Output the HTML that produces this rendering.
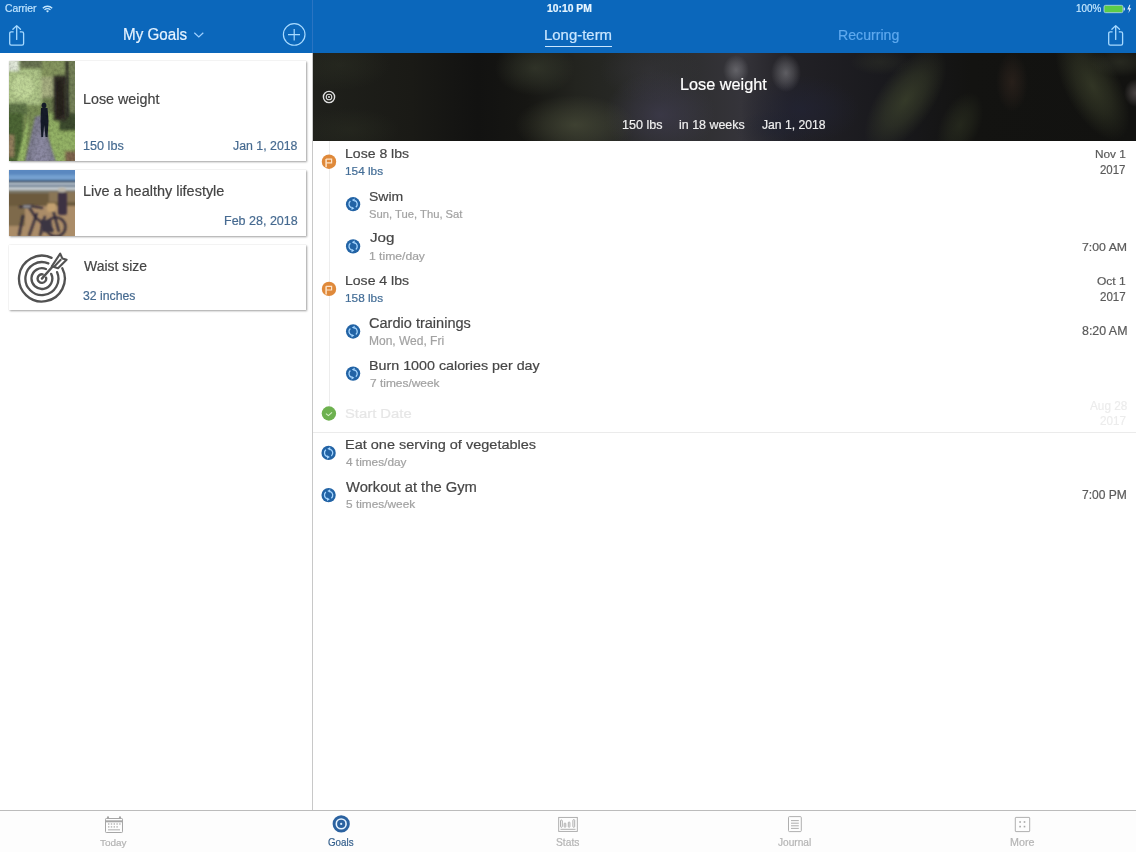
<!DOCTYPE html>
<html><head><meta charset="utf-8">
<style>
html,body{margin:0;padding:0;}
body{width:1136px;height:852px;position:relative;overflow:hidden;background:#ffffff;font-family:"Liberation Sans",sans-serif;}
.a{position:absolute;}
.t{position:absolute;white-space:nowrap;transform-origin:0 0;-webkit-text-stroke:0.2px currentColor;}
#hdr{left:0;top:0;width:1136px;height:53px;background:#0b67bb;}
#vdiv{left:312px;top:0;width:1px;height:810px;background:#c8c8c8;}
#hdiv{left:312px;top:0;width:1px;height:53px;background:#2a74c2;}
.card{position:absolute;left:8.5px;width:297.5px;background:#fff;box-shadow:0.5px 1px 2px rgba(0,0,0,0.36), 0 0 1px rgba(0,0,0,0.14);}
#banner{left:313px;top:53px;width:823px;height:88px;overflow:hidden;background:#1c1d18;}
#tline{left:328.5px;top:141px;width:1px;height:273px;background:#ededed;}
#sep{left:313px;top:432px;width:823px;height:1px;background:#ebebeb;}
#tabline{left:0;top:810px;width:1136px;height:1px;background:#bcbcbc;}
#tabbar{left:0;top:811px;width:1136px;height:41px;background:#fdfdfd;}
</style></head>
<body>
<div id="hdr" class="a"></div>
<div id="hdiv" class="a"></div>

<!-- status bar icons -->
<svg class="a" style="left:42px;top:5px" width="11" height="8" viewBox="0 0 11 8">
  <path d="M0.8 3.2 A6.6 6.6 0 0 1 10.2 3.2" fill="none" stroke="#c6e8ff" stroke-width="1.3"/>
  <path d="M2.5 4.9 A4.2 4.2 0 0 1 8.5 4.9" fill="none" stroke="#c6e8ff" stroke-width="1.3"/>
  <path d="M5.5 7.4 L4 6.1 A2.1 2.1 0 0 1 7 6.1 Z" fill="#c6e8ff"/>
</svg>
<svg class="a" style="left:1103px;top:4px" width="32" height="10" viewBox="0 0 32 10">
  <rect x="1" y="1.3" width="19" height="7.4" rx="1.6" fill="#5ccc48" stroke="#b8d8f0" stroke-width="0.8"/>
  <rect x="20.6" y="3.6" width="1.4" height="2.8" fill="#c0dcf2"/>
  <path d="M26.5 0.8 L24.3 5.4 L26.2 5.4 L25.4 9.2 L28.2 4.3 L26.3 4.3 L27.3 0.8 Z" fill="#e8f2ff"/>
</svg>

<!-- header icons -->
<svg class="a" style="left:8px;top:24px" width="18" height="23" viewBox="0 0 18 23">
  <path d="M5.6 7.9 H3.3 Q1.7 7.9 1.7 9.5 V19.5 Q1.7 21.1 3.3 21.1 H14 Q15.6 21.1 15.6 19.5 V9.5 Q15.6 7.9 14 7.9 H11.8" fill="none" stroke="#a8daff" stroke-width="1.3"/>
  <path d="M8.7 15.4 V1.6 M4.9 5.3 L8.7 1.6 L12.5 5.3" fill="none" stroke="#a8daff" stroke-width="1.3" stroke-linecap="round" stroke-linejoin="round"/>
</svg>
<svg class="a" style="left:1107px;top:24px" width="18" height="23" viewBox="0 0 18 23">
  <path d="M5.6 7.9 H3.3 Q1.7 7.9 1.7 9.5 V19.5 Q1.7 21.1 3.3 21.1 H14 Q15.6 21.1 15.6 19.5 V9.5 Q15.6 7.9 14 7.9 H11.8" fill="none" stroke="#a8daff" stroke-width="1.3"/>
  <path d="M8.7 15.4 V1.6 M4.9 5.3 L8.7 1.6 L12.5 5.3" fill="none" stroke="#a8daff" stroke-width="1.3" stroke-linecap="round" stroke-linejoin="round"/>
</svg>
<svg class="a" style="left:193px;top:31px" width="12" height="8" viewBox="0 0 12 8">
  <path d="M1.3 1.8 L5.8 6 L10.3 1.8" fill="none" stroke="#9fd0ff" stroke-width="1.2"/>
</svg>
<svg class="a" style="left:282px;top:22px" width="25" height="25" viewBox="0 0 25 25">
  <circle cx="12.2" cy="12.45" r="10.8" fill="none" stroke="#a8daff" stroke-width="1.2"/>
  <path d="M12.2 7 V18.4 M6 12.6 H18" stroke="#a8daff" stroke-width="1.2"/>
</svg>
<div class="a" style="left:545px;top:46px;width:67px;height:1.4px;background:#c9e6ff"></div>

<!-- left cards -->
<div class="card" style="top:61px;height:100px">
  <svg class="a" style="left:0;top:0" width="66" height="100" viewBox="0 0 66 100">
    <defs>
      <filter id="b15" x="-30%" y="-30%" width="160%" height="160%"><feGaussianBlur stdDeviation="1.5"/></filter>
      <filter id="b08" x="-30%" y="-30%" width="160%" height="160%"><feGaussianBlur stdDeviation="0.8"/></filter>
      <filter id="b05" x="-30%" y="-30%" width="160%" height="160%"><feGaussianBlur stdDeviation="0.45"/></filter>
      <filter id="tex1" x="0" y="0" width="100%" height="100%">
        <feTurbulence type="fractalNoise" baseFrequency="0.35" numOctaves="2" seed="3" result="n"/>
        <feColorMatrix in="n" type="matrix" values="0 0 0 0 0  0 0 0 0 0  0 0 0 0 0  0 0 0 1.6 -0.55" result="m"/>
        <feComposite in="m" in2="SourceGraphic" operator="in"/>
      </filter>
      <clipPath id="c1"><rect width="66" height="100"/></clipPath>
    </defs>
    <g clip-path="url(#c1)">
    <rect width="66" height="100" fill="#7a8e56"/>
    <g filter="url(#b15)">
      <rect x="-4" y="8" width="36" height="36" fill="#afc588"/>
      <ellipse cx="14" cy="26" rx="11" ry="11" fill="#c2d89a"/>
      <rect x="-4" y="-4" width="14" height="14" fill="#e2e9da"/>
      <rect x="12" y="-4" width="22" height="11" fill="#6a7552"/>
      <rect x="33" y="-4" width="30" height="20" fill="#86965e"/>
      <rect x="32" y="16" width="14" height="22" fill="#a8b082"/>
      <rect x="-4" y="42" width="22" height="12" fill="#5e7446"/>
      <rect x="34" y="36" width="14" height="16" fill="#6e7e50"/>
      <rect x="-4" y="52" width="18" height="52" fill="#4e6636"/>
      <rect x="40" y="52" width="30" height="52" fill="#94b266"/>
      <rect x="50" y="46" width="18" height="24" fill="#3e4c2e"/>
      <rect x="-4" y="74" width="9" height="22" fill="#94805e"/>
      <rect x="56" y="90" width="12" height="12" fill="#806650"/>
      <rect x="60" y="-4" width="8" height="56" fill="#76825a"/>
      <rect x="44" y="14" width="14" height="46" fill="#34302a"/>
    </g>
    <g filter="url(#b08)">
      <path d="M8 101 L15 72 L20 54 L16 101 Z" fill="#98b868"/>
      <path d="M47 18 L54 18 L55 54 L47.5 58 Z" fill="#26201c"/>
      <path d="M56.5 0 L59.5 0 L60 56 L57 56 Z" fill="#30302a"/>
    </g>
    <path d="M16 101 L26 56 L32 54 L47 101 Z" fill="#7f7e92" filter="url(#b08)"/>
    <path d="M23 101 L28 74 L36 74 L41 101 Z" fill="#8c8aa2" filter="url(#b15)"/>
    <g filter="url(#b05)" fill="#161b2c">
      <ellipse cx="35" cy="44.5" rx="2.4" ry="2.8"/>
      <path d="M32 47 L38.5 47 L39.5 60 L38.5 76 L36.5 76 L35.2 64 L34 76 L32.3 76 L31.5 60 Z"/>
    </g>
    <rect width="66" height="100" fill="#1a2010" filter="url(#tex1)" opacity="0.2"/>
    </g>
  </svg>
</div>
<div class="card" style="top:170px;height:66px">
  <svg class="a" style="left:0;top:0" width="66" height="66" viewBox="0 0 66 66">
    <defs><clipPath id="c2"><rect width="66" height="66"/></clipPath></defs>
    <g clip-path="url(#c2)">
    <rect width="66" height="66" fill="#9a7c5a"/>
    <g filter="url(#b08)">
      <rect x="-4" y="-4" width="74" height="10" fill="#5a88c0"/>
      <rect x="-4" y="5" width="74" height="6" fill="#74a0d0"/>
      <rect x="-4" y="10" width="74" height="3" fill="#2d4a68"/>
      <rect x="-4" y="12.5" width="74" height="3" fill="#b8c2cc"/>
      <rect x="-4" y="15" width="74" height="2.5" fill="#5a7088"/>
      <rect x="-4" y="17" width="74" height="3" fill="#c4ccd2"/>
      <rect x="-4" y="20" width="74" height="3" fill="#7e7a6c"/>
      <rect x="-4" y="23" width="74" height="13" fill="#6c5a3e"/>
      <rect x="40" y="22" width="30" height="10" fill="#8a7656"/>
      <rect x="-4" y="36" width="74" height="34" fill="#aa8c68"/>
      <rect x="-4" y="36" width="20" height="20" fill="#7e6a4c"/>
    </g>
    <g filter="url(#b08)" fill="none" stroke="#282236" stroke-width="2.2">
      <circle cx="47" cy="57" r="9.5"/>
      <path d="M10 37 L22 36 L34 38 M20 37 L27 48 L44 61 M28 43 L20 66 M36 46 L31 66 M44 40 L50 62 M14 45 L10 66"/>
    </g>
    <g filter="url(#b08)">
      <path d="M32 50 L42 50 L44 62 L33 62 Z" fill="#3a3442"/>
      <rect x="49" y="22" width="9" height="23" rx="2" fill="#3c3242"/>
      <ellipse cx="53" cy="20" rx="4" ry="2.5" fill="#bcb6a8"/>
      <rect x="38" y="33" width="9" height="9" rx="2" fill="#c2a070"/>
      <rect x="14" y="35" width="8" height="3" fill="#8c8c90"/>
    </g>
    </g>
  </svg>
</div>
<div class="card" style="top:245px;height:65px">
  <svg class="a" style="left:0;top:0" width="66" height="65" viewBox="0 0 66 65">
    <path d="M53.30 23.20 A22.9 22.9 0 1 1 42.58 12.85 M48.09 27.15 A16.5 16.5 0 1 1 39.35 18.41 M42.17 28.88 A10.4 10.4 0 1 1 36.96 24.03 M37.11 32.71 A4.3 4.3 0 1 1 33.65 29.37" fill="none" stroke="#525252" stroke-width="2.35" stroke-linecap="round"/>
    <path d="M32.90 33.60 L48.50 16.00" stroke="#525252" stroke-width="2.35" stroke-linecap="round"/>
    <path d="M42.80 21.30 L51.20 8.60 L53.40 13.60 L57.60 14.80 L49.00 23.30 Z" fill="#ffffff" stroke="#525252" stroke-width="2.1" stroke-linejoin="round"/>
    <path d="M44.60 22.20 L52.20 14.30" stroke="#525252" stroke-width="2"/>
  </svg>
</div>

<!-- banner -->
<div id="banner" class="a" style="background:
    radial-gradient(13px 15px at 423px 17px, rgba(170,170,175,0.4) 0%, rgba(170,170,175,0.22) 50%, rgba(170,170,175,0) 100%),
    radial-gradient(15px 19px at 473px 20px, rgba(175,175,180,0.42) 0%, rgba(175,175,180,0.23) 50%, rgba(175,175,180,0) 100%),
    radial-gradient(60px 30px at 262px 72px, rgba(80,84,62,0.6) 0%, rgba(80,84,62,0.33) 50%, rgba(80,84,62,0) 100%),
    radial-gradient(40px 28px at 222px 15px, rgba(70,76,58,0.5) 0%, rgba(70,76,58,0.28) 50%, rgba(70,76,58,0) 100%),
    radial-gradient(55px 45px at 347px 62px, rgba(68,64,88,0.6) 0%, rgba(68,64,88,0.33) 50%, rgba(68,64,88,0) 100%),
    radial-gradient(50px 30px at 337px 17px, rgba(58,56,64,0.45) 0%, rgba(58,56,64,0.25) 50%, rgba(58,56,64,0) 100%),
    radial-gradient(60px 35px at 487px 57px, rgba(34,36,56,0.6) 0%, rgba(34,36,56,0.33) 50%, rgba(34,36,56,0) 100%),
    radial-gradient(50px 25px at 27px 12px, rgba(50,54,40,0.35) 0%, rgba(50,54,40,0.19) 50%, rgba(50,54,40,0) 100%),
    radial-gradient(50px 22px at 37px 77px, rgba(48,52,38,0.35) 0%, rgba(48,52,38,0.19) 50%, rgba(48,52,38,0) 100%),
    radial-gradient(16px 30px at 699px 29px, rgba(70,50,40,0.4) 0%, rgba(70,50,40,0.22) 50%, rgba(70,50,40,0) 100%),
    radial-gradient(12px 14px at 823px 40px, rgba(140,130,130,0.45) 0%, rgba(140,130,130,0.25) 50%, rgba(140,130,130,0) 100%),
    linear-gradient(90deg, #1f201b 0%, #1a1a16 12%, #121211 20%, #161613 26%, #23241f 32%, #2a2b2a 42%, #35343a 52%, #222126 58%, #19191d 70%, #131311 80%, #121210 100%);"></div>
<div class="a" style="left:313px;top:53px;width:823px;height:88px;overflow:hidden"><div class="a" style="left:-313px;top:-53px;width:1136px;height:200px"><div class="a" style="left:877.5px;top:40.0px;width:55px;height:120px;transform:rotate(35deg);background:radial-gradient(closest-side, rgba(72,80,50,0.6) 0%, rgba(72,80,50,0.36) 50%, rgba(72,80,50,0) 100%);"></div><div class="a" style="left:1064.5px;top:26.0px;width:55px;height:120px;transform:rotate(-28deg);background:radial-gradient(closest-side, rgba(70,76,50,0.6) 0%, rgba(70,76,50,0.36) 50%, rgba(70,76,50,0) 100%);"></div><div class="a" style="left:940.0px;top:90.0px;width:40px;height:70px;transform:rotate(25deg);background:radial-gradient(closest-side, rgba(56,62,40,0.45) 0%, rgba(56,62,40,0.27) 50%, rgba(56,62,40,0) 100%);"></div><div class="a" style="left:1090.0px;top:47.0px;width:60px;height:30px;transform:rotate(0deg);background:radial-gradient(closest-side, rgba(70,74,56,0.4) 0%, rgba(70,74,56,0.24) 50%, rgba(70,74,56,0) 100%);"></div><div class="a" style="left:850.0px;top:49.0px;width:60px;height:26px;transform:rotate(0deg);background:radial-gradient(closest-side, rgba(56,60,44,0.35) 0%, rgba(56,60,44,0.21) 50%, rgba(56,60,44,0) 100%);"></div><div class="a" style="left:735.0px;top:110.0px;width:80px;height:40px;transform:rotate(0deg);background:radial-gradient(closest-side, rgba(30,34,50,0.4) 0%, rgba(30,34,50,0.24) 50%, rgba(30,34,50,0) 100%);"></div></div></div>
<svg class="a" style="left:320px;top:88px" width="18" height="18" viewBox="0 0 18 18">
  <circle cx="9" cy="9" r="5.6" fill="none" stroke="#e0e0e0" stroke-width="1.4"/>
  <circle cx="9" cy="9" r="2.8" fill="none" stroke="#e0e0e0" stroke-width="1.1"/>
  <circle cx="9" cy="9" r="0.9" fill="#f0f0f0"/>
</svg>

<div id="vdiv" class="a" style="top:53px;height:757px"></div>
<div id="tline" class="a"></div>
<div id="sep" class="a"></div>

<!-- timeline icons -->
<svg class="a" style="left:0;top:0;overflow:visible" width="1" height="1">
  <defs>
    <g id="flag">
      <circle r="7.2" fill="#df893a"/>
      <path d="M-2.9 5.6 V-2.6" stroke="#fde3c8" stroke-width="1.5"/>
      <path d="M-2.9 -2.6 H2.6 V1.1 H-2.9" fill="none" stroke="#fde3c8" stroke-width="1.2"/>
    </g>
    <g id="rec">
      <circle r="7.15" fill="#2263a5"/>
      <path d="M-2.75 -3.1 A4.1 4.1 0 0 0 -1.5 3.8" fill="none" stroke="#a6d6ff" stroke-width="1.3"/>
      <path d="M2.75 3.1 A4.1 4.1 0 0 0 1.5 -3.8" fill="none" stroke="#a6d6ff" stroke-width="1.3"/>
      <path d="M-1.6 2.4 L1.3 4.1 L-1.6 5.8 Z" fill="#a6d6ff"/>
      <path d="M1.6 -2.4 L-1.3 -4.1 L1.6 -5.8 Z" fill="#a6d6ff"/>
    </g>
  </defs>
  <use href="#flag" x="329" y="161.7"/>
  <use href="#rec" x="353.1" y="204.2"/>
  <use href="#rec" x="353.1" y="246.4"/>
  <use href="#flag" x="329" y="288.9"/>
  <use href="#rec" x="353.1" y="331.5"/>
  <use href="#rec" x="353.1" y="373.6"/>
  <g transform="translate(328.9 413.5)">
    <circle r="7.2" fill="#6db14f"/>
    <path d="M-3 0.1 L-0.5 2.1 L3.1 -1.1" fill="none" stroke="#d6f0c8" stroke-width="1.1"/>
  </g>
  <use href="#rec" x="328.6" y="452.9"/>
  <use href="#rec" x="328.6" y="495.1"/>
</svg>

<!-- tab bar -->
<div id="tabbar" class="a"></div>
<div id="tabline" class="a"></div>
<svg class="a" style="left:0;top:811px" width="1136" height="41" viewBox="0 811 1136 41">
  <!-- today calendar -->
  <g fill="none" stroke="#a6a6a6" stroke-width="1">
    <rect x="105.5" y="818.5" width="17" height="14" rx="0.8"/>
    <path d="M105.5 821.3 H122.5" stroke-width="2"/>
  </g>
  <g fill="#a6a6a6">
    <circle cx="108" cy="817.4" r="1.1"/><circle cx="120" cy="817.4" r="1.1"/>
    <rect x="108" y="823.4" width="1.4" height="1.2"/><rect x="110.8" y="823.4" width="1.4" height="1.2"/><rect x="113.6" y="823.4" width="1.4" height="1.2"/><rect x="116.4" y="823.4" width="1.4" height="1.2"/><rect x="119.2" y="823.4" width="1.4" height="1.2"/>
    <rect x="108" y="826.3" width="1.4" height="1.2"/><rect x="110.8" y="826.3" width="1.4" height="1.2"/><rect x="113.6" y="826.3" width="1.4" height="1.2"/><rect x="116.4" y="826.3" width="1.4" height="1.2"/>
    <rect x="108" y="829.4" width="12" height="0.9"/>
  </g>
  <!-- goals -->
  <circle cx="341.2" cy="823.9" r="8.6" fill="#2b62a0"/>
  <circle cx="341.2" cy="823.9" r="4.9" fill="none" stroke="#e8f4ff" stroke-width="1.6"/>
  <circle cx="341.2" cy="823.9" r="1.1" fill="#d8ecff"/>
  <!-- stats -->
  <g fill="none" stroke="#a6a6a6" stroke-width="0.9">
    <rect x="558.7" y="817.4" width="18.6" height="14"/>
    <rect x="560.5" y="820" width="1.8" height="7.3" rx="0.9"/>
    <rect x="564.2" y="823" width="1.6" height="4.3" rx="0.8"/>
    <rect x="568.3" y="822" width="1.6" height="5.3" rx="0.8"/>
    <rect x="572.9" y="819.6" width="1.8" height="7.7" rx="0.9"/>
    <path d="M560.5 829.3 H575.5"/>
  </g>
  <!-- journal -->
  <g fill="none" stroke="#a6a6a6" stroke-width="0.9">
    <rect x="788.5" y="816.6" width="12.8" height="15" rx="1"/>
    <path d="M791 820.6 H798.8 M791 823.2 H798.8 M791 825.8 H798.8 M791 828.4 H798.8"/>
  </g>
  <!-- more -->
  <g>
    <rect x="1015.3" y="817.4" width="14.4" height="14.2" rx="0.6" fill="none" stroke="#a6a6a6" stroke-width="0.9"/>
    <rect x="1019.3" y="821.2" width="1.6" height="1.6" fill="#a6a6a6"/><rect x="1023.7" y="821.2" width="1.6" height="1.6" fill="#a6a6a6"/>
    <rect x="1019.3" y="825.8" width="1.6" height="1.6" fill="#a6a6a6"/><rect x="1023.7" y="825.8" width="1.6" height="1.6" fill="#a6a6a6"/>
  </g>
</svg>

<div class="t" style="left:5.28px;top:2.82px;font-size:10.17px;line-height:12.21px;color:#bfe4ff;font-weight:normal;transform:scaleX(1.0124);">Carrier</div>
<div class="t" style="left:547.08px;top:2.82px;font-size:10.17px;line-height:12.21px;color:#e6f5ff;font-weight:bold;transform:scaleX(1.0179);">10:10 PM</div>
<div class="t" style="left:1076.06px;top:2.54px;font-size:10.47px;line-height:12.56px;color:#c6e8ff;font-weight:normal;transform:scaleX(0.9400);">100%</div>
<div class="t" style="left:123.28px;top:25.18px;font-size:16.13px;line-height:19.36px;color:#e6f3ff;font-weight:normal;transform:scaleX(0.9425);">My Goals</div>
<div class="t" style="left:544.20px;top:26.69px;font-size:14.53px;line-height:17.44px;color:#c9e6ff;font-weight:normal;transform:scaleX(1.0285);">Long-term</div>
<div class="t" style="left:838.37px;top:26.55px;font-size:14.68px;line-height:17.62px;color:#5fa9ee;font-weight:normal;transform:scaleX(0.9641);">Recurring</div>
<div class="t" style="left:83.25px;top:90.76px;font-size:14.46px;line-height:17.35px;color:#444444;font-weight:normal;transform:scaleX(0.9904);">Lose weight</div>
<div class="t" style="left:82.85px;top:137.93px;font-size:13.23px;line-height:15.87px;color:#466a90;font-weight:normal;transform:scaleX(0.9563);">150 lbs</div>
<div class="t" style="left:232.91px;top:137.93px;font-size:13.23px;line-height:15.87px;color:#466a90;font-weight:normal;transform:scaleX(0.9330);">Jan 1, 2018</div>
<div class="t" style="left:82.64px;top:182.97px;font-size:14.24px;line-height:17.09px;color:#444444;font-weight:normal;transform:scaleX(1.0151);">Live a healthy lifestyle</div>
<div class="t" style="left:224.00px;top:212.79px;font-size:13.37px;line-height:16.05px;color:#466a90;font-weight:normal;transform:scaleX(0.9362);">Feb 28, 2018</div>
<div class="t" style="left:83.83px;top:257.97px;font-size:14.24px;line-height:17.09px;color:#444444;font-weight:normal;transform:scaleX(0.9785);">Waist size</div>
<div class="t" style="left:83.31px;top:288.89px;font-size:12.21px;line-height:14.65px;color:#466a90;font-weight:normal;transform:scaleX(1.0031);">32 inches</div>
<div class="t" style="left:679.70px;top:75.04px;font-size:16.28px;line-height:19.53px;color:#ffffff;font-weight:normal;transform:scaleX(0.9992);">Lose weight</div>
<div class="t" style="left:621.76px;top:116.66px;font-size:13.52px;line-height:16.22px;color:#f0f0f0;font-weight:normal;transform:scaleX(0.9310);">150 lbs</div>
<div class="t" style="left:678.89px;top:116.66px;font-size:13.52px;line-height:16.22px;color:#f0f0f0;font-weight:normal;transform:scaleX(0.9197);">in 18 weeks</div>
<div class="t" style="left:762.22px;top:116.66px;font-size:13.52px;line-height:16.22px;color:#f0f0f0;font-weight:normal;transform:scaleX(0.9000);">Jan 1, 2018</div>
<div class="t" style="left:345.18px;top:145.66px;font-size:13.52px;line-height:16.22px;color:#464646;font-weight:normal;transform:scaleX(1.0402);">Lose 8 lbs</div>
<div class="t" style="left:345.41px;top:164.45px;font-size:11.63px;line-height:13.95px;color:#436d96;font-weight:normal;transform:scaleX(1.0160);">154 lbs</div>
<div class="t" style="left:369.37px;top:188.52px;font-size:13.66px;line-height:16.4px;color:#464646;font-weight:normal;transform:scaleX(1.0281);">Swim</div>
<div class="t" style="left:369.49px;top:207.72px;font-size:11.34px;line-height:13.6px;color:#a2a2a2;font-weight:normal;transform:scaleX(0.9919);">Sun, Tue, Thu, Sat</div>
<div class="t" style="left:369.77px;top:230.21px;font-size:12.94px;line-height:15.52px;color:#464646;font-weight:normal;transform:scaleX(1.1722);">Jog</div>
<div class="t" style="left:369.09px;top:250.13px;font-size:10.90px;line-height:13.08px;color:#a2a2a2;font-weight:normal;transform:scaleX(1.1133);">1 time/day</div>
<div class="t" style="left:345.18px;top:272.79px;font-size:13.37px;line-height:16.05px;color:#464646;font-weight:normal;transform:scaleX(1.0515);">Lose 4 lbs</div>
<div class="t" style="left:345.41px;top:291.72px;font-size:11.34px;line-height:13.6px;color:#436d96;font-weight:normal;transform:scaleX(1.0420);">158 lbs</div>
<div class="t" style="left:369.47px;top:314.97px;font-size:14.24px;line-height:17.09px;color:#464646;font-weight:normal;transform:scaleX(1.0216);">Cardio trainings</div>
<div class="t" style="left:369.24px;top:333.89px;font-size:12.21px;line-height:14.65px;color:#a2a2a2;font-weight:normal;transform:scaleX(0.9831);">Mon, Wed, Fri</div>
<div class="t" style="left:369.06px;top:357.79px;font-size:13.37px;line-height:16.05px;color:#464646;font-weight:normal;transform:scaleX(1.0691);">Burn 1000 calories per day</div>
<div class="t" style="left:369.60px;top:377.27px;font-size:10.76px;line-height:12.91px;color:#a2a2a2;font-weight:normal;transform:scaleX(1.1089);">7 times/week</div>
<div class="t" style="left:345.33px;top:405.52px;font-size:13.66px;line-height:16.4px;color:#e6e6e6;font-weight:normal;transform:scaleX(1.0838);">Start Date</div>
<div class="t" style="left:344.84px;top:436.52px;font-size:13.66px;line-height:16.4px;color:#464646;font-weight:normal;transform:scaleX(1.0620);">Eat one serving of vegetables</div>
<div class="t" style="left:345.76px;top:456.13px;font-size:10.90px;line-height:13.08px;color:#a2a2a2;font-weight:normal;transform:scaleX(1.0857);">4 times/day</div>
<div class="t" style="left:345.93px;top:478.97px;font-size:14.24px;line-height:17.09px;color:#464646;font-weight:normal;transform:scaleX(1.0357);">Workout at the Gym</div>
<div class="t" style="left:345.53px;top:497.58px;font-size:11.48px;line-height:13.78px;color:#a2a2a2;font-weight:normal;transform:scaleX(1.0339);">5 times/week</div>
<div class="t" style="left:1094.95px;top:147.45px;font-size:11.63px;line-height:13.95px;color:#5a5a5a;font-weight:normal;transform:scaleX(1.0175);">Nov 1</div>
<div class="t" style="left:1100.43px;top:162.89px;font-size:12.21px;line-height:14.65px;color:#5a5a5a;font-weight:normal;transform:scaleX(0.9366);">2017</div>
<div class="t" style="left:1081.88px;top:240.31px;font-size:11.77px;line-height:14.13px;color:#5a5a5a;font-weight:normal;transform:scaleX(1.0452);">7:00 AM</div>
<div class="t" style="left:1097.06px;top:274.45px;font-size:11.63px;line-height:13.95px;color:#5a5a5a;font-weight:normal;transform:scaleX(1.0320);">Oct 1</div>
<div class="t" style="left:1100.12px;top:289.89px;font-size:12.21px;line-height:14.65px;color:#5a5a5a;font-weight:normal;transform:scaleX(0.9443);">2017</div>
<div class="t" style="left:1081.84px;top:324.17px;font-size:11.92px;line-height:14.3px;color:#5a5a5a;font-weight:normal;transform:scaleX(1.0405);">8:20 AM</div>
<div class="t" style="left:1089.80px;top:398.21px;font-size:12.94px;line-height:15.52px;color:#ececec;font-weight:normal;transform:scaleX(0.9113);">Aug 28</div>
<div class="t" style="left:1100.12px;top:413.89px;font-size:12.21px;line-height:14.65px;color:#ececec;font-weight:normal;transform:scaleX(0.9559);">2017</div>
<div class="t" style="left:1082.40px;top:488.17px;font-size:11.92px;line-height:14.3px;color:#5a5a5a;font-weight:normal;transform:scaleX(1.0120);">7:00 PM</div>
<div class="t" style="left:100.20px;top:837.10px;font-size:9.88px;line-height:11.86px;color:#b4b4b4;font-weight:normal;transform:scaleX(1.0079);">Today</div>
<div class="t" style="left:328.01px;top:836.82px;font-size:10.17px;line-height:12.21px;color:#345f8c;font-weight:normal;transform:scaleX(0.9614);">Goals</div>
<div class="t" style="left:556.34px;top:836.82px;font-size:10.17px;line-height:12.21px;color:#b4b4b4;font-weight:normal;transform:scaleX(1.0097);">Stats</div>
<div class="t" style="left:778.35px;top:836.82px;font-size:10.17px;line-height:12.21px;color:#b4b4b4;font-weight:normal;transform:scaleX(0.9982);">Journal</div>
<div class="t" style="left:1009.94px;top:836.82px;font-size:10.17px;line-height:12.21px;color:#b4b4b4;font-weight:normal;transform:scaleX(1.0560);">More</div>
</body></html>
